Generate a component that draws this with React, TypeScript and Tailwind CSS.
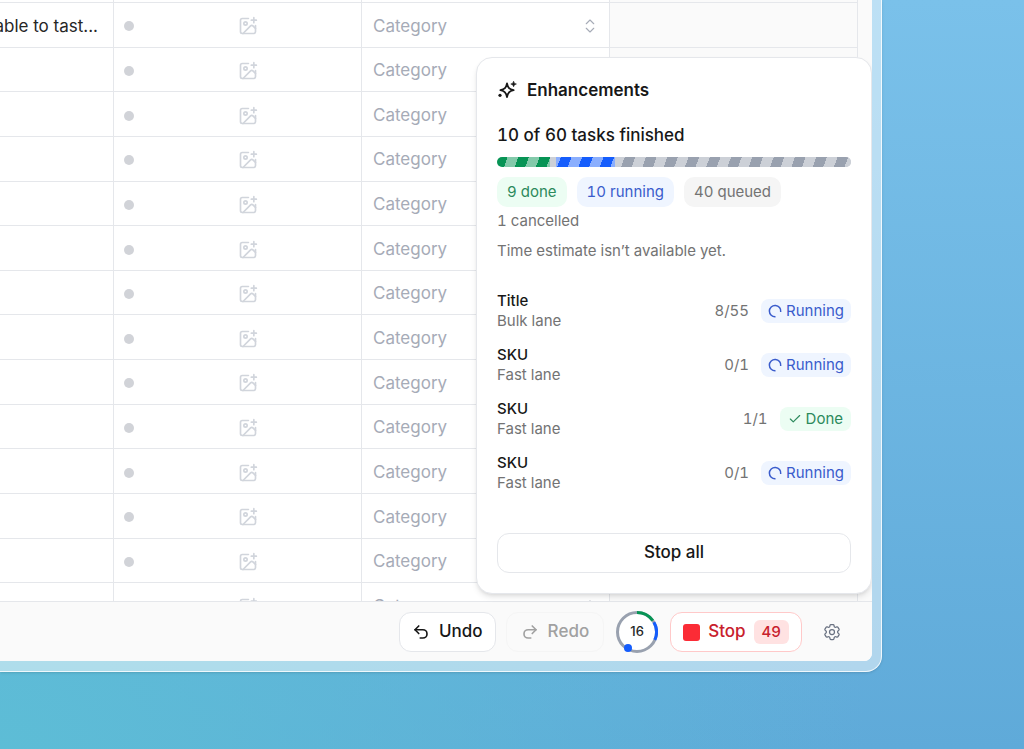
import { Check, ChevronsUpDown, ImagePlus, Redo2, Undo2 } from "lucide-react";
import { HiOutlineCog6Tooth } from "react-icons/hi2";

const rows = Array.from({ length: 14 }, (_, i) => ({
    id: i + 1,
    text: i === 0 ? "able to tast..." : "",
}));

const lanes = [
    { id: 1, name: "Title", lane: "Bulk lane", count: "8/55", done: false },
    { id: 2, name: "SKU", lane: "Fast lane", count: "0/1", done: false },
    { id: 3, name: "SKU", lane: "Fast lane", count: "1/1", done: true },
    { id: 4, name: "SKU", lane: "Fast lane", count: "0/1", done: false },
];

const segments = [
    { id: "done", share: 9, color: "bg-[#079455]" },
    { id: "cancelled", share: 1, color: "bg-[#99a1af]" },
    { id: "running", share: 10, color: "bg-[#155dfc]" },
    { id: "queued", share: 40, color: "bg-[#99a1af]" },
];

function SparkleIcon() {
    return (
        <svg viewBox="0 0 20 20" className="size-5" fill="none" stroke="currentColor" strokeWidth="1.8" strokeLinejoin="round" aria-hidden="true">
            <path d="M10 3.4c1 4.5 2.2 5.7 6.6 6.8-4.4 1.1-5.6 2.3-6.6 6.8-1-4.5-2.2-5.7-6.6-6.8C7.800 9.100 9 7.900 10 3.400Z" />
            <path d="M16.600 1.200c.5 1.800 1 2.300 2.800 2.800-1.800.5-2.300 1-2.800 2.800-.5-1.800-1-2.300-2.800-2.800 1.800-.5 2.300-1 2.800-2.800Z" fill="currentColor" strokeWidth="0.6" />
            <circle cx="3" cy="15.300" r="1.600" fill="currentColor" stroke="none" />
        </svg>
    );
}

function Spinner() {
    return (
        <svg viewBox="0 0 14 14" className="size-3.5" fill="none" stroke="currentColor" strokeWidth="1.5" aria-hidden="true">
            <path d="M7.500 12.800A5.700 5.700 0 1 1 12.700 8" />
        </svg>
    );
}

function ProgressRing() {
    return (
        <button type="button" aria-label="Enhancement progress" className="relative flex size-[42px] items-center justify-center rounded-full bg-white text-[13px] font-medium text-neutral-800">
            <svg viewBox="0 0 42 42" className="absolute inset-0 size-full" fill="none" strokeWidth="3" aria-hidden="true">
                <circle cx="21" cy="21" r="19.5" stroke="#99a1af" />
                <circle cx="21" cy="21" r="19.5" stroke="#079455" pathLength="60" strokeDasharray="9 51" transform="rotate(-90 21 21)" />
                <circle cx="21" cy="21" r="19.5" stroke="#155dfc" pathLength="60" strokeDasharray="9 51" transform="rotate(-30 21 21)" />
                <circle cx="12" cy="37" r="4" fill="#155dfc" />
            </svg>
            <span>16</span>
        </button>
    );
}

function DataTable() {
    return (
        <table className="h-[628px] w-full table-fixed border-separate border-spacing-0 text-[17px]">
            <colgroup>
                <col className="w-[114px]" />
                <col className="w-[248px]" />
                <col className="w-[248px]" />
                <col className="w-[248px]" />
                <col />
            </colgroup>
            <tbody>
                <tr className="h-[3px]">
                    <td className="h-[3px] border-r border-b border-gray-200 p-0" />
                    <td className="border-r border-b border-gray-200 p-0" />
                    <td className="border-r border-b border-gray-200 p-0" />
                    <td className="border-r border-b border-gray-200 bg-neutral-50 p-0" />
                    <td className="bg-neutral-50 p-0" />
                </tr>
                {rows.map((row) => (
                    <tr key={row.id}>
                        <td className="border-r border-b border-gray-200 p-0 pt-[3px] pr-[15px]">
                            <div className="flex justify-end overflow-hidden whitespace-nowrap text-neutral-800">{row.text}</div>
                        </td>
                        <td className="border-r border-b border-gray-200 p-0 pt-[3px] pl-2.5">
                            <div className="flex items-center">
                                <span className="size-2.5 rounded-full bg-[#d1d3d8]" />
                                <button type="button" aria-label={`Add image to row ${row.id}`} className="flex flex-1 justify-center text-[#d1d5dc]">
                                    <ImagePlus className="size-5" strokeWidth={2} />
                                </button>
                            </div>
                        </td>
                        <td className="border-r border-b border-gray-200 p-0 pt-[3px]">
                            <button type="button" className="flex w-full items-center justify-between pr-2.5 pl-[11px] text-[#a6abb7]">
                                Category
                                <ChevronsUpDown className="size-[18px]" strokeWidth={1.5} />
                            </button>
                        </td>
                        <td className="border-r border-b border-gray-200 bg-neutral-50 p-0" />
                        <td className="bg-neutral-50 p-0" />
                    </tr>
                ))}
            </tbody>
        </table>
    );
}

function EnhancementsPanel() {
    return (
        <section className="absolute right-0 bottom-[67px] w-[396px] rounded-2xl border border-gray-200 bg-white p-5 tabular-nums shadow-md">
            <h2 className="flex items-center gap-2.5 text-[17px] leading-6 font-semibold text-neutral-900">
                <SparkleIcon />
                Enhancements
            </h2>

            <p className="mt-[21px] text-[17px] leading-6 font-medium text-neutral-900">10 of 60 tasks finished</p>
            <div
                role="progressbar"
                aria-label="Enhancement tasks"
                aria-valuemin={0}
                aria-valuemax={60}
                aria-valuenow={10}
                className="relative mt-2.5 flex h-2.5 overflow-hidden rounded-full"
            >
                {segments.map((s) => (
                    <span key={s.id} className={s.color} style={{ flexGrow: s.share }} />
                ))}
                <span className="absolute inset-0 bg-[repeating-linear-gradient(110deg,transparent_0px,transparent_10px,rgba(255,255,255,0.5)_10px,rgba(255,255,255,0.5)_20px)]" />
            </div>

            <div className="mt-2.5 flex flex-wrap items-center gap-x-2.5 text-[15px] leading-5">
                <span className="rounded-[10px] bg-[#ecfdf3] px-2.5 py-[5px] text-[#2c8a5c]">9 done</span>
                <span className="rounded-[10px] bg-[#eff5ff] px-2.5 py-[5px] text-[#3a5ccc]">10 running</span>
                <span className="rounded-[10px] bg-neutral-100 px-2.5 py-[5px] text-neutral-500">40 queued</span>
                <span className="mt-1 w-full text-neutral-500">1 cancelled</span>
            </div>
            <p className="mt-2.5 text-[15px] leading-5 text-neutral-500">Time estimate isn’t available yet.</p>

            <ul className="mt-[30px] flex flex-col gap-3.5">
                {lanes.map((lane) => (
                    <li key={lane.id} className="flex items-center text-[15px] leading-5">
                        <div className="flex-1">
                            <p className="font-medium text-neutral-900">{lane.name}</p>
                            <p className="text-neutral-500">{lane.lane}</p>
                        </div>
                        <span className="mr-3 text-neutral-500">{lane.count}</span>
                        {lane.done ? (
                            <span className="flex items-center gap-1 rounded-lg bg-[#ecfdf3] px-2 py-0.5 text-[#2c8a5c]">
                                <Check className="size-3.5" />
                                Done
                            </span>
                        ) : (
                            <span className="flex items-center gap-1 rounded-lg bg-[#eff5ff] px-[7px] py-0.5 text-[#3a5ccc]">
                                <Spinner />
                                Running
                            </span>
                        )}
                    </li>
                ))}
            </ul>

            <button type="button" className="mt-10 h-10 w-full rounded-xl border border-gray-200 bg-white text-[17px] font-medium text-neutral-900">
                Stop all
            </button>
        </section>
    );
}

export default function App() {
    return (
        <main className="h-screen bg-[radial-gradient(ellipse_at_0%_100%,#5dbdd6_0%,rgba(93,189,214,0)_60%),linear-gradient(180deg,#7ac1ea_0%,#5faad9_100%)] pr-[142px] pb-[77px] font-['Inter',sans-serif]">
            <div className="h-full rounded-br-2xl border-r border-b border-white/80 bg-white/50 pr-[9px] pb-[10px] shadow-sm">
                <div className="relative flex h-full flex-col overflow-hidden rounded-br-lg bg-white">
                    <div className="min-h-0 flex-1 overflow-hidden">
                        <DataTable />
                    </div>

                    <footer className="flex items-center justify-end border-t border-gray-200 bg-neutral-50 pt-[9px] pr-[30px] pb-2 text-[17px] font-medium">
                        <button type="button" className="flex h-10 items-center gap-[9px] rounded-xl border border-gray-200 bg-white px-3 text-neutral-900">
                            <Undo2 className="size-[18px]" strokeWidth={2.2} />
                            Undo
                        </button>
                        <button type="button" disabled className="ml-2.5 flex h-10 items-center gap-[9px] rounded-xl border border-neutral-100 bg-neutral-50 px-3.5 text-neutral-400">
                            <Redo2 className="size-[18px]" strokeWidth={2.2} />
                            Redo
                        </button>
                        <div className="mx-3">
                            <ProgressRing />
                        </div>
                        <button type="button" className="flex h-10 items-center gap-2 rounded-xl border border-[#ffc9c9] bg-white px-3 text-[#c8202c] tabular-nums">
                            <span className="size-[17px] rounded-[3px] bg-[#fb2c36]" />
                            Stop
                            <span className="rounded-md bg-[#ffe2e2] px-2 text-[15px] leading-6">49</span>
                        </button>
                        <button type="button" aria-label="Settings" className="ml-5 text-gray-500">
                            <HiOutlineCog6Tooth className="size-5" />
                        </button>
                    </footer>

                    <EnhancementsPanel />
                </div>
            </div>
        </main>
    );
}
